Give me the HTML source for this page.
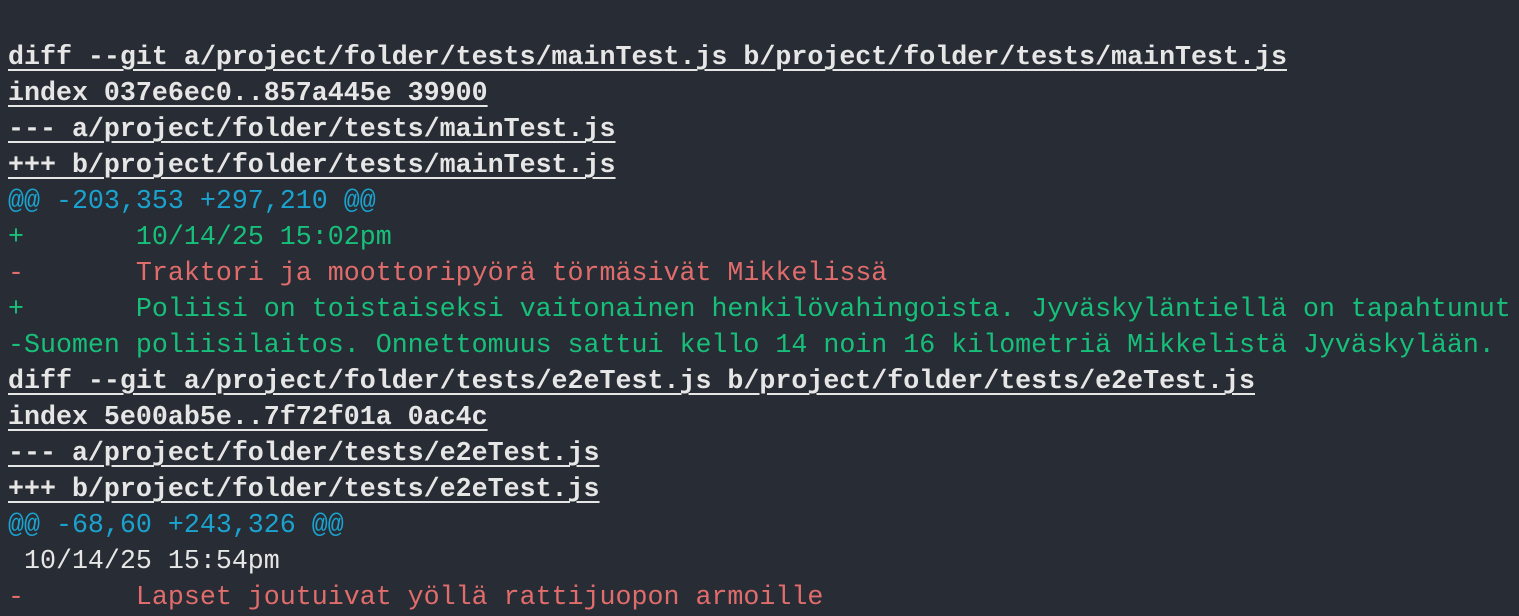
<!DOCTYPE html>
<html><head><meta charset="utf-8"><style>
html,body{margin:0;padding:0;background:#282c34;width:1519px;height:613px;overflow:hidden}
pre{margin:0;position:absolute;left:8px;top:40px;font-family:"Liberation Mono","DejaVu Sans Mono",monospace;font-size:26.65px;line-height:36px;color:#e6e6e6;tab-size:8;-moz-tab-size:8;white-space:pre}
.h{font-weight:bold;text-decoration:underline;text-underline-offset:5px;text-decoration-thickness:2px}
.c{color:#1ba3d0}.g{color:#17c07a}.r{color:#e06c6c}
</style></head><body><pre><span class="h">diff --git a/project/folder/tests/mainTest.js b/project/folder/tests/mainTest.js</span>
<span class="h">index 037e6ec0..857a445e 39900</span>
<span class="h">--- a/project/folder/tests/mainTest.js</span>
<span class="h">+++ b/project/folder/tests/mainTest.js</span>
<span class="c">@@ -203,353 +297,210 @@</span>
<span class="g">+	10/14/25 15:02pm</span>
<span class="r">-	Traktori ja moottoripyörä törmäsivät Mikkelissä</span>
<span class="g">+	Poliisi on toistaiseksi vaitonainen henkilövahingoista. Jyväskyläntiellä on tapahtunut</span>
<span class="g">-Suomen poliisilaitos. Onnettomuus sattui kello 14 noin 16 kilometriä Mikkelistä Jyväskylään.</span>
<span class="h">diff --git a/project/folder/tests/e2eTest.js b/project/folder/tests/e2eTest.js</span>
<span class="h">index 5e00ab5e..7f72f01a 0ac4c</span>
<span class="h">--- a/project/folder/tests/e2eTest.js</span>
<span class="h">+++ b/project/folder/tests/e2eTest.js</span>
<span class="c">@@ -68,60 +243,326 @@</span>
 10/14/25 15:54pm
<span class="r">-	Lapset joutuivat yöllä rattijuopon armoille</span></pre></body></html>
